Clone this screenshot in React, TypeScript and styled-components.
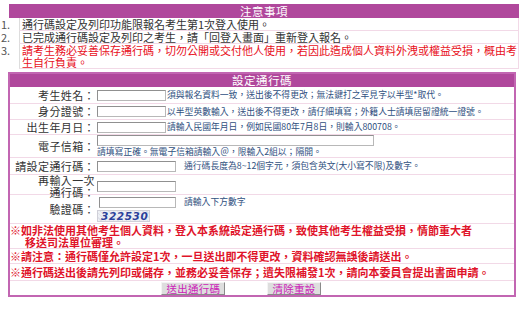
import styled, { createGlobalStyle } from "styled-components";

const GlobalStyle = createGlobalStyle`
	*, *::before, *::after {
		box-sizing: border-box;
	}
	body {
		margin: 0;
		background: #fff;
		font-family: "Noto Sans CJK TC", "Noto Sans", sans-serif;
		color: #333;
	}
`;

const purple = "#b0489c";
const line = "#f2d9e7";

const App = () => {
	return (
		<>
			<GlobalStyle />
			<StyledPage>
				<StyledNotice>
					<StyledHeader $h={14}>注意事項</StyledHeader>
					<StyledNoticeRow>
						<StyledNum>1.</StyledNum>
						<StyledNoticeText>通行碼設定及列印功能限報名考生第1次登入使用。</StyledNoticeText>
					</StyledNoticeRow>
					<StyledNoticeRow>
						<StyledNum>2.</StyledNum>
						<StyledNoticeText>已完成通行碼設定及列印之考生，請「回登入畫面」重新登入報名。</StyledNoticeText>
					</StyledNoticeRow>
					<StyledNoticeRow>
						<StyledNum>3.</StyledNum>
						<StyledNoticeText $red>
							請考生務必妥善保存通行碼，切勿公開或交付他人使用，若因此造成個人資料外洩或權益受損，概由考生自行負責。
						</StyledNoticeText>
					</StyledNoticeRow>
				</StyledNotice>

				<StyledForm>
					<StyledHeader $h={13}>設定通行碼</StyledHeader>

					<StyledField $h={17}>
						<StyledLabel>考生姓名：</StyledLabel>
						<StyledCell>
							<StyledInput $w={69} />
							<StyledHint $gap={1}>須與報名資料一致，送出後不得更改；無法鍵打之罕見字以半型*取代。</StyledHint>
						</StyledCell>
					</StyledField>

					<StyledField $h={16}>
						<StyledLabel>身分證號：</StyledLabel>
						<StyledCell>
							<StyledInput $w={69} />
							<StyledHint $gap={1}>以半型英數輸入，送出後不得更改，請仔細填寫；外籍人士請填居留證統一證號。</StyledHint>
						</StyledCell>
					</StyledField>

					<StyledField $h={15}>
						<StyledLabel>出生年月日：</StyledLabel>
						<StyledCell>
							<StyledInput $w={69} />
							<StyledHint $gap={1}>請輸入民國年月日，例如民國80年7月8日，則輸入800708。</StyledHint>
						</StyledCell>
					</StyledField>

					<StyledField $h={23}>
						<StyledLabel>電子信箱：</StyledLabel>
						<StyledStack>
							<StyledInput $w={277} />
							<StyledHint $gap={0}>請填寫正確。無電子信箱請輸入＠，限輸入2組以；隔開。</StyledHint>
						</StyledStack>
					</StyledField>

					<StyledField $h={17}>
						<StyledLabel>請設定通行碼：</StyledLabel>
						<StyledCell>
							<StyledInput $w={79} />
							<StyledHint $gap={8}>通行碼長度為8~12個字元，須包含英文(大小寫不限)及數字。</StyledHint>
						</StyledCell>
					</StyledField>

					<StyledField $h={20}>
						<StyledLabel $tall>再輸入一次<br />通行碼：</StyledLabel>
						<StyledCell>
							<StyledInput $w={79} />
						</StyledCell>
					</StyledField>

					<StyledField $h={29}>
						<StyledLabel>驗證碼：</StyledLabel>
						<StyledStack>
							<StyledCell>
								<StyledInput $w={77} />
								<StyledHint $gap={8}>請輸入下方數字</StyledHint>
							</StyledCell>
							<StyledCaptcha>322530</StyledCaptcha>
						</StyledStack>
					</StyledField>

					<StyledWarn $h={25}>
						<span>※如非法使用其他考生個人資料，登入本系統設定通行碼，致使其他考生權益受損，情節重大者</span>
						<StyledIndent>移送司法單位審理。</StyledIndent>
					</StyledWarn>
					<StyledWarn $h={15}>※請注意：通行碼僅允許設定1次，一旦送出即不得更改，資料確認無誤後請送出。</StyledWarn>
					<StyledWarn $h={17}>※通行碼送出後請先列印或儲存，並務必妥善保存；遺失限補發1次，請向本委員會提出書面申請。</StyledWarn>

					<StyledButtons>
						<StyledButton>送出通行碼</StyledButton>
						<StyledButton>清除重設</StyledButton>
					</StyledButtons>
				</StyledForm>
			</StyledPage>
		</>
	);
};

const StyledPage = styled.div`
	width: 525px;
	height: 318px;
	padding-top: 4px;
`;

const StyledNotice = styled.div`
	margin-left: 9px;
	width: 510px;
`;

const StyledHeader = styled.div<{ $h: number }>`
	background: ${purple};
	color: #fff;
	font-size: 11.5px;
	line-height: ${(p) => p.$h}px;
	height: ${(p) => p.$h}px;
	text-align: center;
	letter-spacing: 0.5px;
`;

const StyledNoticeRow = styled.div`
	display: grid;
	grid-template-columns: 11px 1fr;
	margin-left: -9px;
	font-size: 11px;
	line-height: 12px;
`;

const StyledNum = styled.div`
	color: #555;
	padding-left: 1px;
`;

const StyledNoticeText = styled.div<{ $red?: boolean }>`
	color: ${(p) => (p.$red ? "#e8101c" : "#333")};
	border-left: 1px solid #ddd;
	border-right: 1px solid ${line};
	border-bottom: 1px solid ${line};
	padding: 0 0 0 2px;
	margin-left: 8px;
`;

const StyledForm = styled.div`
	margin: 3px 0 0 8px;
	width: 508px;
	border: 2px solid #c266b2;
`;

const StyledField = styled.div<{ $h: number }>`
	display: grid;
	grid-template-columns: 85px 1fr;
	align-items: center;
	height: ${(p) => p.$h}px;
	border-bottom: 1px solid ${line};
`;

const StyledLabel = styled.div<{ $tall?: boolean }>`
	text-align: right;
	font-size: 11px;
	line-height: ${(p) => (p.$tall ? "11.5px" : "11px")};
	letter-spacing: 0.4px;
	color: #333;
`;

const StyledCell = styled.div`
	display: flex;
	align-items: center;
	padding-left: 2px;
`;

const StyledStack = styled.div`
	display: flex;
	flex-direction: column;
	align-items: flex-start;
	padding-left: 2px;
	gap: 1px;
`;

const StyledInput = styled.input<{ $w: number }>`
	width: ${(p) => p.$w}px;
	height: 11px;
	border: 1px solid #b8b8b8;
	border-top-color: #909090;
	border-left-color: #909090;
	padding: 0;
	margin: 0;
	background: #fff;
`;

const StyledHint = styled.span<{ $gap: number }>`
	margin-left: ${(p) => p.$gap}px;
	font-size: 8.8px;
	line-height: 10px;
	color: #2f4f80;
	white-space: nowrap;
`;

const StyledCaptcha = styled.div`
	width: 53px;
	height: 12px;
	margin-top: 1px;
	background: repeating-linear-gradient(45deg, #eef0f4 0 2px, #dfe2ea 2px 3px);
	border: 1px solid #d0d0d8;
	color: #2a3f9a;
	font-family: "DejaVu Sans", sans-serif;
	font-size: 10.5px;
	font-weight: bold;
	font-style: italic;
	line-height: 10px;
	letter-spacing: 0.6px;
	padding-left: 3px;
`;

const StyledWarn = styled.div<{ $h: number }>`
	height: ${(p) => p.$h}px;
	display: flex;
	flex-direction: column;
	justify-content: center;
	border-bottom: 1px solid ${line};
	color: #e0142a;
	font-size: 11px;
	font-weight: bold;
	line-height: 12px;
	white-space: nowrap;
`;

const StyledIndent = styled.span`
	padding-left: 15px;
`;

const StyledButtons = styled.div`
	display: flex;
	justify-content: center;
	align-items: center;
	gap: 42px;
	height: 14px;
	padding-right: 42px;
`;

const StyledButton = styled.button`
	height: 13px;
	padding: 0 4px;
	margin: 0;
	font-family: inherit;
	font-size: 10.5px;
	line-height: 11px;
	color: #cc1cb8;
	background: #dedede;
	border: 1px solid;
	border-color: #f4f4f4 #8a8a8a #8a8a8a #f4f4f4;
	letter-spacing: 0.3px;
`;

export default App;
